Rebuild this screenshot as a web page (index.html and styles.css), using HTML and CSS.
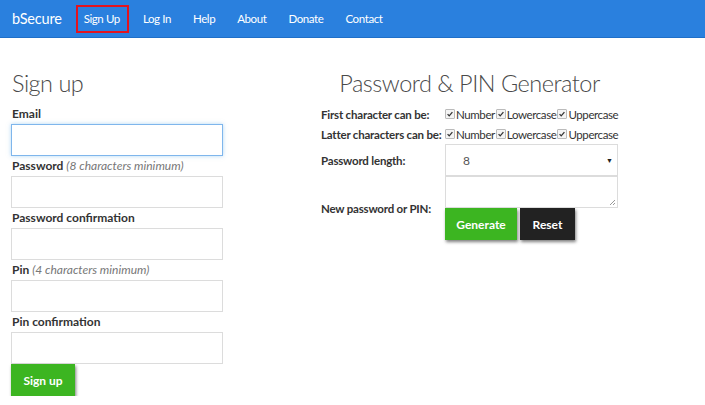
FILE: index.html
```html
<!DOCTYPE html>
<html>
<head>
<meta charset="utf-8">
<link rel="stylesheet" href="styles.css">
</head>
<body>
<nav class="navbar">
  <span class="brand">bSecure</span>
  <a class="nav-link active">Sign Up</a>
  <a class="nav-link">Log In</a>
  <a class="nav-link">Help</a>
  <a class="nav-link">About</a>
  <a class="nav-link">Donate</a>
  <a class="nav-link">Contact</a>
</nav>
<main class="page">
  <section class="signup">
    <h1 class="title">Sign up</h1>
    <label class="field-label">Email</label>
    <input class="input focused" type="text">
    <label class="field-label">Password <em class="hint">(8 characters minimum)</em></label>
    <input class="input" type="password">
    <label class="field-label">Password confirmation</label>
    <input class="input" type="password">
    <label class="field-label">Pin <em class="hint">(4 characters minimum)</em></label>
    <input class="input" type="password">
    <label class="field-label">Pin confirmation</label>
    <input class="input" type="password">
    <button class="btn btn-success">Sign up</button>
  </section>
  <section class="generator">
    <h1 class="title centered">Password &amp; PIN Generator</h1>
    <div class="gen-grid">
      <div class="gen-label">First character can be:</div>
      <div class="checks">
        <span class="check"><span class="box"><svg viewBox="0 0 10 10"><path d="M2 5.2 L4 7.3 L8 2.6" fill="none" stroke="#333" stroke-width="1.6"/></svg></span>Number</span>
        <span class="check"><span class="box"><svg viewBox="0 0 10 10"><path d="M2 5.2 L4 7.3 L8 2.6" fill="none" stroke="#333" stroke-width="1.6"/></svg></span>Lowercase</span>
        <span class="check"><span class="box"><svg viewBox="0 0 10 10"><path d="M2 5.2 L4 7.3 L8 2.6" fill="none" stroke="#333" stroke-width="1.6"/></svg></span>Uppercase</span>
      </div>
      <div class="gen-label">Latter characters can be:</div>
      <div class="checks">
        <span class="check"><span class="box"><svg viewBox="0 0 10 10"><path d="M2 5.2 L4 7.3 L8 2.6" fill="none" stroke="#333" stroke-width="1.6"/></svg></span>Number</span>
        <span class="check"><span class="box"><svg viewBox="0 0 10 10"><path d="M2 5.2 L4 7.3 L8 2.6" fill="none" stroke="#333" stroke-width="1.6"/></svg></span>Lowercase</span>
        <span class="check"><span class="box"><svg viewBox="0 0 10 10"><path d="M2 5.2 L4 7.3 L8 2.6" fill="none" stroke="#333" stroke-width="1.6"/></svg></span>Uppercase</span>
      </div>
      <div class="gen-label">Password length:</div>
      <div class="select">
        <span>8</span>
        <span class="caret">&#9660;</span>
      </div>
      <div class="gen-label">New password or PIN:</div>
      <div class="output-cell">
        <div class="textarea"><svg class="grip" viewBox="0 0 8 8"><path d="M7 2 L2 7 M7 5 L5 7" stroke="#999" stroke-width="1"/></svg></div>
        <div class="btn-row">
          <button class="btn btn-success gen">Generate</button>
          <button class="btn btn-dark">Reset</button>
        </div>
      </div>
    </div>
  </section>
</main>
</body>
</html>
```
FILE: styles.css
```css
* { box-sizing: border-box; }
body {
  margin: 0;
  font-family: "Lato", "Open Sans", sans-serif;
  font-size: 12px;
  color: #333;
  background: #fff;
}
.navbar {
  height: 38px;
  background: #2a80de;
  border-bottom: 1px solid #1f6fc8;
  display: flex;
  align-items: center;
  padding-left: 12px;
}
.brand {
  color: #fff;
  font-size: 14.5px;
  letter-spacing: -0.2px;
  margin-right: 14px;
}
.nav-link {
  color: #fff;
  font-size: 11.5px;
  letter-spacing: -0.4px;
  padding: 0 11px;
  line-height: 24px;
}
.nav-link.active {
  border: 2px solid #e4141e;
  padding: 0 7px 0 6px;
  margin-right: 3px;
  height: 28px;
  display: flex;
  align-items: center;
}
.page {
  display: flex;
  padding-left: 11px;
  gap: 98px;
}
.signup {
  width: 212px;
  display: flex;
  flex-direction: column;
  align-items: flex-start;
}
.title {
  font-weight: 300;
  font-size: 23.5px;
  letter-spacing: -0.5px;
  color: #4a4a4a;
  margin: 26px 0 0 1px;
  line-height: 38px;
  height: 38px;
}
.signup .title {
  margin-bottom: 2px;
}
.title.centered {
  text-align: center;
  margin-left: 0;
}
.field-label {
  display: block;
  font-weight: bold;
  font-size: 12px;
  line-height: 20px;
  height: 20px;
  padding-left: 1px;
}
.hint {
  font-weight: normal;
  color: #777;
}
.input {
  width: 212px;
  height: 32px;
  border: 1px solid #dcdcdc;
  margin: 0;
  display: block;
}
.input.focused {
  border-color: #7fb6ec;
  box-shadow: 0 0 4px rgba(102, 175, 233, 0.5);
}
.btn {
  border: 0;
  color: #fff;
  font-family: inherit;
  font-size: 12px;
  font-weight: bold;
  height: 32px;
  box-shadow: 1px 2px 3px rgba(0, 0, 0, 0.5);
  cursor: pointer;
}
.btn-success {
  background: #3cb521;
  width: 64px;
}
.btn-dark {
  background: #222;
  width: 55px;
}
.generator {
  width: 297px;
}
.gen-grid {
  display: grid;
  grid-template-columns: 124px 173px;
  grid-template-rows: 20px 20px 32px auto;
  align-items: center;
  margin-top: 2px;
}
.gen-label {
  font-weight: bold;
  font-size: 11.5px;
  letter-spacing: -0.2px;
  white-space: nowrap;
}
.checks {
  display: flex;
  font-size: 11.5px;
  letter-spacing: -0.4px;
  white-space: nowrap;
}
.check {
  display: inline-flex;
  align-items: center;
  margin-right: 1px;
}
.box {
  width: 10px;
  height: 10px;
  border: 1px solid #bbb;
  border-radius: 1px;
  display: inline-flex;
  background: #f4f4f4;
  margin-right: 1px;
}
.box svg { width: 8px; height: 8px; }
.select {
  height: 32px;
  border: 1px solid #dcdcdc;
  display: flex;
  align-items: center;
  justify-content: space-between;
  padding: 0 4px 0 17px;
  color: #555;
}
.caret {
  font-size: 7px;
  color: #222;
}
.textarea {
  height: 32px;
  border: 1px solid #dcdcdc;
  position: relative;
}
.grip {
  position: absolute;
  right: 1px;
  bottom: 1px;
  width: 8px;
  height: 8px;
}
.btn-row {
  display: flex;
  gap: 3px;
}
.btn.gen {
  width: 72px;
}
```
